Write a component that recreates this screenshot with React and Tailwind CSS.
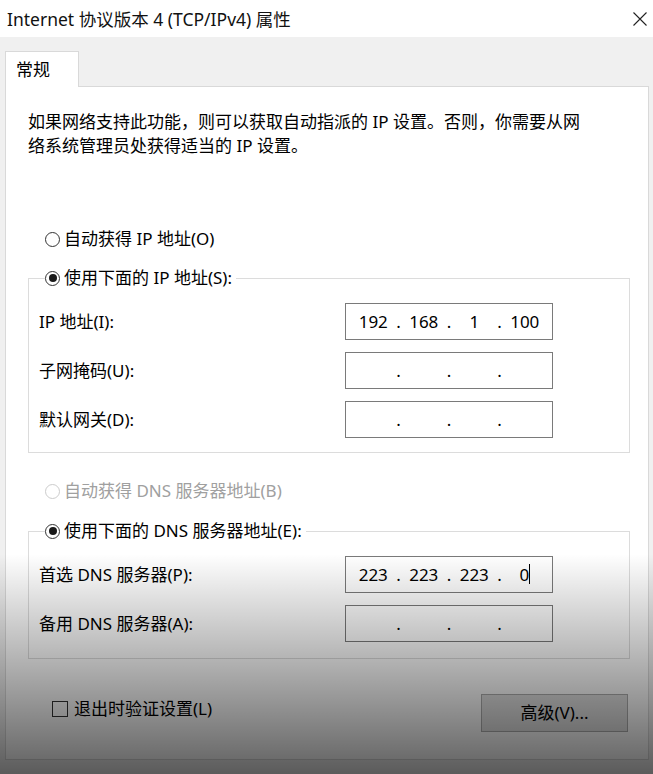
import React from "react";

function Radio({ checked, disabled, label }) {
  return (
    <div className={`flex items-center h-[24px] ${disabled ? "text-[#a0a0a0]" : "text-black"}`}>
      <span
        className={`w-[15px] h-[15px] rounded-full border flex items-center justify-center bg-white ${
          disabled ? "border-[#cccccc]" : "border-[#333333]"
        }`}
      >
        {checked && <span className="w-[8px] h-[8px] rounded-full bg-[#1a1a1a]" />}
      </span>
      <span className="ml-[4px]">{label}</span>
    </div>
  );
}

function IpBox({ parts = ["", "", "", ""], caret, shaded }) {
  return (
    <div
      className={`w-[208px] h-[37px] border border-[#7a7a7a] flex items-center px-[6px] text-[17px] ${
        shaded ? "bg-[#f0f0f0] border-[#adadad]" : "bg-white"
      }`}
    >
      {parts.map((p, i) => (
        <React.Fragment key={i}>
          {i > 0 && <span className="w-[8px] text-center">.</span>}
          <span className="flex-1 text-center">
            {p}
            {caret && i === 3 && <span className="inline-block w-[1px] h-[20px] bg-black align-middle -mt-[3px]" />}
          </span>
        </React.Fragment>
      ))}
    </div>
  );
}

function Row({ label, children }) {
  return (
    <div className="flex items-center">
      <span className="w-[306px]">{label}</span>
      {children}
    </div>
  );
}

export default function App() {
  return (
    <div className="relative w-[653px] h-[774px] overflow-hidden bg-[#f0f0f0] text-[17px] leading-[24px] text-black font-['Noto_Sans','Noto_Sans_CJK_SC',sans-serif]">
      {/* Title bar */}
      <div className="h-[37px] bg-white flex items-center justify-between pl-[7px] pr-[5px]">
        <span className="text-[17.5px] text-[#111]">Internet 协议版本 4 (TCP/IPv4) 属性</span>
        <svg width="16" height="16" viewBox="0 0 16 16" className="text-[#222]">
          <path d="M1.5 1.5 L14.5 14.5 M14.5 1.5 L1.5 14.5" stroke="currentColor" strokeWidth="1.1" fill="none" />
        </svg>
      </div>

      {/* Tabs */}
      <div className="px-[5px] pt-[14px]">
        <div className="relative z-10 -mb-[1px] w-[74px] h-[36px] bg-white border border-b-0 border-[#d9d9d9] flex items-center pl-[10px]">
          常规
        </div>

        <div className="h-[674px] w-[644px] bg-white border border-[#d9d9d9] pl-[22px] pr-[18px] pt-[23px]">
          <p>
            如果网络支持此功能，则可以获取自动指派的 IP 设置。否则，你需要从网
            <br />
            络系统管理员处获得适当的 IP 设置。
          </p>

          <div className="mt-[69px] pl-[17px]">
            <Radio label="自动获得 IP 地址(O)" />
          </div>

          <fieldset className="mt-[15px] border border-[#dcdcdc] pl-[10px] pb-[14px]">
            <legend className="ml-[6px] pr-[4px] bg-white">
              <Radio checked label="使用下面的 IP 地址(S):" />
            </legend>
            <div className="mt-[13px] flex flex-col gap-[12px]">
              <Row label="IP 地址(I):">
                <IpBox parts={["192", "168", "1", "100"]} />
              </Row>
              <Row label="子网掩码(U):">
                <IpBox />
              </Row>
              <Row label="默认网关(D):">
                <IpBox />
              </Row>
            </div>
          </fieldset>

          <div className="mt-[26px] pl-[17px]">
            <Radio disabled label="自动获得 DNS 服务器地址(B)" />
          </div>

          <fieldset className="mt-[16px] border border-[#dcdcdc] pl-[10px] pb-[16px]">
            <legend className="ml-[6px] pr-[4px] bg-white">
              <Radio checked label="使用下面的 DNS 服务器地址(E):" />
            </legend>
            <div className="mt-[13px] flex flex-col gap-[12px]">
              <Row label="首选 DNS 服务器(P):">
                <IpBox parts={["223", "223", "223", "0"]} caret />
              </Row>
              <Row label="备用 DNS 服务器(A):">
                <IpBox />
              </Row>
            </div>
          </fieldset>

          <div className="mt-[35px] flex items-center justify-between">
            <label className="flex items-center pl-[24px] -mt-[8px]">
              <span className="w-[16px] h-[16px] border border-[#333333] bg-white" />
              <span className="ml-[6px]">退出时验证设置(L)</span>
            </label>
            <button className="mr-[2px] w-[147px] h-[38px] bg-[#e1e1e1] border border-[#adadad] text-[17px]">
              高级(V)...
            </button>
          </div>
        </div>
      </div>

      {/* darkening overlay from the source capture */}
      <div className="pointer-events-none absolute inset-x-0 bottom-0 h-[220px] bg-linear-to-b from-transparent to-black/[0.62]" />
    </div>
  );
}
